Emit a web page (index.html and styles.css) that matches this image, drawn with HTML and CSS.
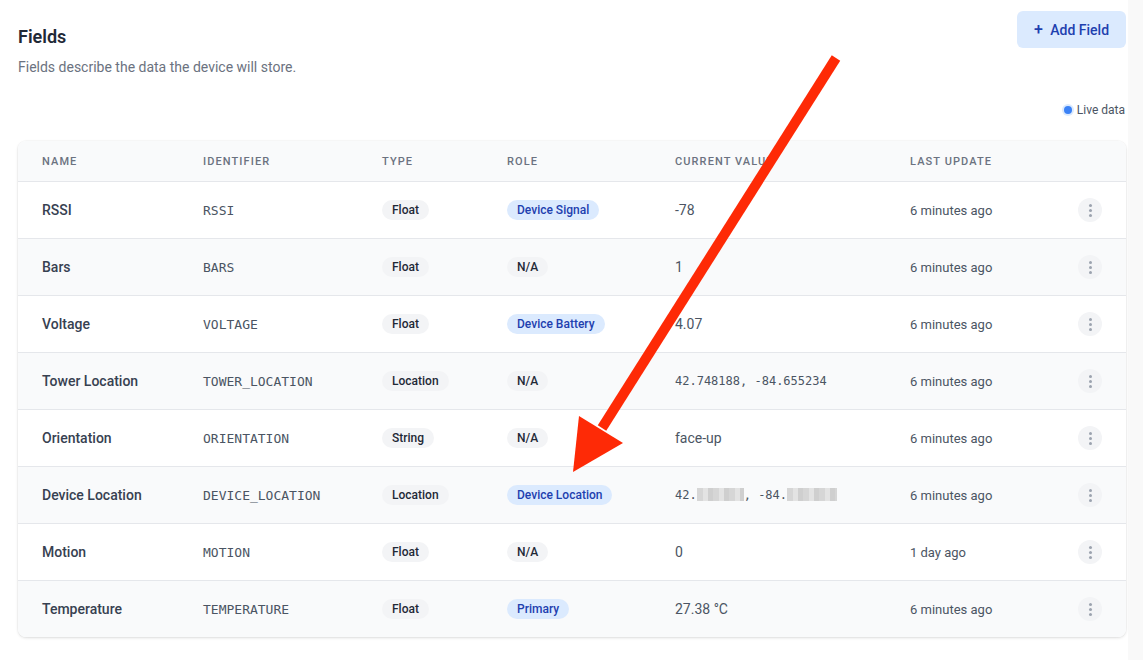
FILE: index.html
```html
<!DOCTYPE html>
<html lang="en">
<head>
    <meta charset="UTF-8">
    <meta name="viewport" content="width=device-width, initial-scale=1.0">
    <title>Fields</title>
    <link rel="stylesheet" href="styles.css">
</head>
<body>
    <div class="page">
        <div class="page-head">
            <div class="titles">
                <h1>Fields</h1>
                <p class="subtitle">Fields describe the data the device will store.</p>
            </div>
            <button class="add-btn" type="button"><span class="plus">+</span> Add Field</button>
        </div>

        <div class="live"><span class="dot"></span>Live data</div>

        <div class="card">
            <div class="row head">
                <div>Name</div>
                <div>Identifier</div>
                <div>Type</div>
                <div>Role</div>
                <div>Current Value</div>
                <div>Last Update</div>
                <div></div>
            </div>

            <div class="row">
                <div class="name">RSSI</div>
                <div class="ident">RSSI</div>
                <div><span class="badge">Float</span></div>
                <div><span class="badge blue">Device Signal</span></div>
                <div class="value">-78</div>
                <div class="time">6 minutes ago</div>
                <div><span class="more"><i></i><i></i><i></i></span></div>
            </div>
            <div class="row alt">
                <div class="name">Bars</div>
                <div class="ident">BARS</div>
                <div><span class="badge">Float</span></div>
                <div><span class="badge">N/A</span></div>
                <div class="value">1</div>
                <div class="time">6 minutes ago</div>
                <div><span class="more"><i></i><i></i><i></i></span></div>
            </div>
            <div class="row">
                <div class="name">Voltage</div>
                <div class="ident">VOLTAGE</div>
                <div><span class="badge">Float</span></div>
                <div><span class="badge blue">Device Battery</span></div>
                <div class="value">4.07</div>
                <div class="time">6 minutes ago</div>
                <div><span class="more"><i></i><i></i><i></i></span></div>
            </div>
            <div class="row alt">
                <div class="name">Tower Location</div>
                <div class="ident">TOWER_LOCATION</div>
                <div><span class="badge">Location</span></div>
                <div><span class="badge">N/A</span></div>
                <div class="value mono">42.748188, -84.655234</div>
                <div class="time">6 minutes ago</div>
                <div><span class="more"><i></i><i></i><i></i></span></div>
            </div>
            <div class="row">
                <div class="name">Orientation</div>
                <div class="ident">ORIENTATION</div>
                <div><span class="badge">String</span></div>
                <div><span class="badge">N/A</span></div>
                <div class="value">face-up</div>
                <div class="time">6 minutes ago</div>
                <div><span class="more"><i></i><i></i><i></i></span></div>
            </div>
            <div class="row alt">
                <div class="name">Device Location</div>
                <div class="ident">DEVICE_LOCATION</div>
                <div><span class="badge">Location</span></div>
                <div><span class="badge blue">Device Location</span></div>
                <div class="value mono">42.<span class="blur b1"></span>, -84.<span class="blur b2"></span></div>
                <div class="time">6 minutes ago</div>
                <div><span class="more"><i></i><i></i><i></i></span></div>
            </div>
            <div class="row">
                <div class="name">Motion</div>
                <div class="ident">MOTION</div>
                <div><span class="badge">Float</span></div>
                <div><span class="badge">N/A</span></div>
                <div class="value">0</div>
                <div class="time">1 day ago</div>
                <div><span class="more"><i></i><i></i><i></i></span></div>
            </div>
            <div class="row alt">
                <div class="name">Temperature</div>
                <div class="ident">TEMPERATURE</div>
                <div><span class="badge">Float</span></div>
                <div><span class="badge blue">Primary</span></div>
                <div class="value">27.38 °C</div>
                <div class="time">6 minutes ago</div>
                <div><span class="more"><i></i><i></i><i></i></span></div>
            </div>
        </div>
    </div>

    <!-- annotation arrow drawn over the screenshot -->
    <svg class="arrow" width="1143" height="660" viewBox="0 0 1143 660">
        <line x1="836" y1="58" x2="602" y2="428" stroke="#fe2a06" stroke-width="10"/>
        <polygon points="573,472 579,416 623,443" fill="#fe2a06"/>
    </svg>
</body>
</html>
```

FILE: styles.css
```css
body {
    margin: 0;
    font-family: Roboto, "Liberation Sans", sans-serif;
    color: #374151;
    background: #fff;
    position: relative;
}

.page {
    padding: 11px 17px 20px 18px;
    min-height: 629px;
    background: linear-gradient(90deg, #fff 1128px, #f9f9f9 1128px);
}

.page-head {
    display: flex;
    justify-content: space-between;
    align-items: flex-start;
}

.titles {
    padding-top: 15px;
}

h1 {
    margin: 0;
    font-size: 18px;
    line-height: 22px;
    font-weight: 600;
    color: #1f2937;
}

.subtitle {
    margin: 10px 0 0;
    font-size: 14px;
    line-height: 18px;
    color: #6b7280;
}

.add-btn {
    height: 37px;
    width: 109px;
    border: none;
    border-radius: 6px;
    background: #dbeafe;
    color: #1e40af;
    font-family: inherit;
    font-size: 14px;
    font-weight: 500;
    cursor: pointer;
    padding: 0;
}

.add-btn .plus {
    font-size: 16px;
    margin-right: 4px;
}

.live {
    display: flex;
    justify-content: flex-end;
    align-items: center;
    gap: 5px;
    margin-top: 27px;
    padding-right: 1px;
    font-size: 12px;
    color: #4b5563;
}

.dot {
    width: 8px;
    height: 8px;
    border-radius: 50%;
    background: #3b82f6;
    box-shadow: 0 0 0 2px #dbeafe;
}

.card {
    margin-top: 24px;
    border-radius: 8px;
    background: #fff;
    box-shadow: 0 1px 3px rgba(0, 0, 0, 0.12), 0 0 0 1px rgba(0, 0, 0, 0.02);
    overflow: hidden;
}

.row {
    display: grid;
    grid-template-columns: 161px 179px 125px 168px 235px 1fr 24px;
    align-items: center;
    padding: 0 24px;
    height: 56px;
    border-top: 1px solid #e5e7eb;
    font-size: 14px;
}

.row.alt {
    background: #f9fafb;
}

.row.head {
    height: 40px;
    border-top: none;
    background: #f9fafb;
    font-size: 11px;
    font-weight: 500;
    letter-spacing: 0.1em;
    text-transform: uppercase;
    color: #6b7280;
}

.name {
    font-weight: 500;
    color: #374151;
}

.ident {
    font-family: "DejaVu Sans Mono", "Liberation Mono", monospace;
    font-size: 13px;
    color: #4b5563;
}

.value {
    color: #4b5563;
}

.value.mono {
    font-family: "DejaVu Sans Mono", "Liberation Mono", monospace;
    font-size: 12px;
}

.time {
    font-size: 13px;
    color: #4b5563;
}

.badge {
    display: inline-block;
    padding: 0 10px;
    height: 20px;
    line-height: 20px;
    border-radius: 10px;
    background: #f3f4f6;
    color: #1f2937;
    font-size: 12px;
    font-weight: 500;
}

.badge.blue {
    background: #dbeafe;
    color: #1e40af;
}

.blur {
    display: inline-block;
    height: 13px;
    vertical-align: -2px;
    background: repeating-linear-gradient(90deg, #d6d6d6 0 6px, #e3e3e3 6px 11px, #cfcfcf 11px 16px);
}

.b1 {
    width: 47px;
}

.b2 {
    width: 50px;
}

.more {
    display: flex;
    flex-direction: column;
    align-items: center;
    justify-content: center;
    gap: 2px;
    width: 24px;
    height: 24px;
    border-radius: 50%;
    background: #f3f4f6;
}

.more i {
    width: 3px;
    height: 3px;
    border-radius: 50%;
    background: #9ca3af;
}

.arrow {
    position: absolute;
    left: 0;
    top: 0;
    pointer-events: none;
}
```
